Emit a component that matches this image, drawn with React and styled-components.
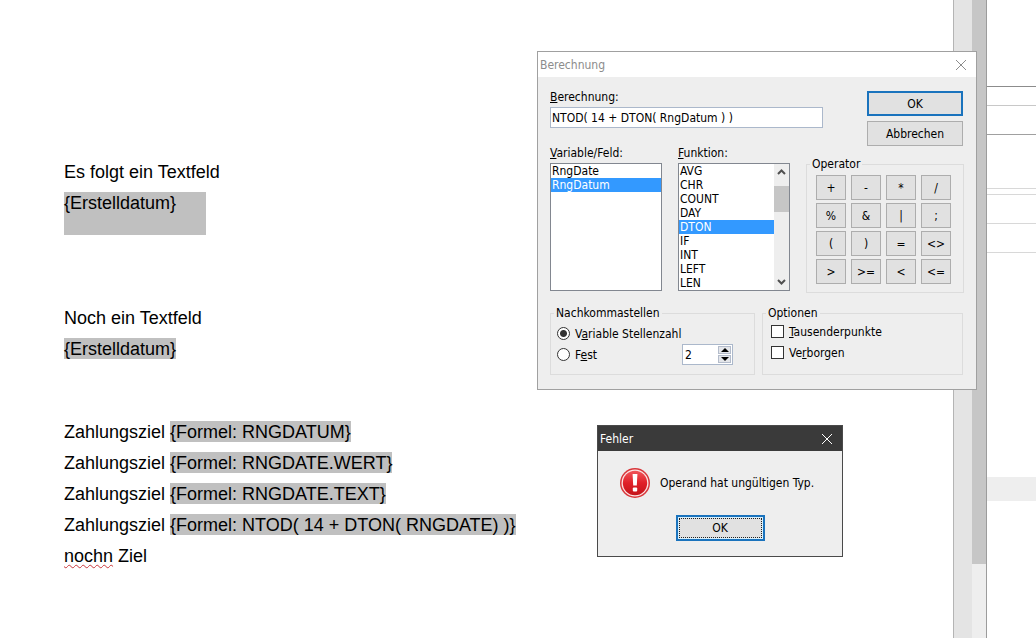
import React, { useState } from 'react';
import styled, { createGlobalStyle } from 'styled-components';

const GlobalStyle = createGlobalStyle`
    * {
        box-sizing: border-box;
    }

    body {
        margin: 0;
        background: #fff;
        color: #000;
        font-family: 'DejaVu Sans Condensed', 'Noto Sans', sans-serif;
        font-size: 12px;
        overflow: hidden;
    }

    button, input, select {
        margin: 0;
        padding: 0;
        font: inherit;
        color: inherit;
    }

    svg {
        flex-shrink: 0;
    }
`;

/* ---------- writer page in the background ---------- */

const Desktop = styled.div`
    position: relative;
    display: flex;
    min-height: 100vh;
`;

const Page = styled.main`
    flex: 1;
    padding: 162px 0 0 64px;
    font-family: 'Liberation Sans', Arial, sans-serif;
    font-size: 18px;
    line-height: 21px;
`;

const Section = styled.section`
    margin-bottom: ${({ $space }) => $space || 0}px;
`;

const Paragraph = styled.p`
    margin: 0 0 10px;
    white-space: nowrap;

    &:last-child {
        margin-bottom: 0;
    }
`;

const Field = styled.span`
    display: inline-block;
    height: 21px;
    margin-top: -1px;
    padding-top: 1px;
    vertical-align: top;
    background: #c0c0c0;
`;

const Frame = styled.div`
    width: 142px;
    height: 43px;
    margin-top: -1px;
    padding-top: 1px;
    background: #c0c0c0;
`;

const Misspelled = styled.span`
    text-decoration: underline wavy #c8383c 1px;
    text-underline-offset: 2px;
    text-decoration-skip-ink: none;
`;

const PageEdge = styled.div`
    width: 19px;
    border-left: 1px solid #b4b4b4;
    background: #e4e4e4;
`;

const PageScroll = styled.div`
    width: 15px;
    border-right: 1px solid #9c9c9c;
    background: #eee;
`;

const PageThumb = styled.div`
    height: 564px;
    background: #c6c6c6;
`;

const Sidebar = styled.aside`
    width: 49px;
`;

const SidebarRow = styled.div`
    height: ${({ $height }) => $height}px;
    border-bottom: 1px solid ${({ $line }) => $line || '#d8d8d8'};
`;

const SidebarBand = styled.div`
    height: 24px;
    margin-top: 224px;
    background: #eee;
`;

/* ---------- windows ---------- */

const Window = styled.section`
    position: absolute;
    left: ${({ $left }) => $left}px;
    top: ${({ $top }) => $top}px;
    width: ${({ $width }) => $width}px;
    border: 1px solid ${({ $dark }) => ($dark ? '#4a4a4a' : '#a0a0a0')};
    background: #eee;
`;

const TitleBar = styled.header`
    display: flex;
    align-items: center;
    justify-content: space-between;
    height: 25px;
    padding: 0 9px 0 2px;
    background: ${({ $dark }) => ($dark ? '#3a3a3a' : '#fff')};
    color: ${({ $dark }) => ($dark ? '#fff' : '#8c8c8c')};
`;

const Title = styled.h1`
    margin: 0;
    font-size: 12px;
    font-weight: 400;
`;

const CloseButton = styled.button`
    display: flex;
    border: 0;
    background: none;
`;

const Body = styled.form`
    padding: 14px 12px 14px;
`;

const Row = styled.div`
    display: flex;
    gap: ${({ $gap }) => $gap}px;
    margin-bottom: ${({ $space }) => $space || 0}px;
`;

const Labelled = styled.div`
    width: ${({ $width }) => $width}px;
`;

const Label = styled.label`
    display: block;
    margin-bottom: 4px;
    line-height: 12px;
`;

const FormulaInput = styled.input`
    display: block;
    width: 100%;
    height: 21px;
    padding: 0 1px;
    border: 1px solid #abb8cb;
    background: #fff;
    outline: 0;
`;

const ButtonStack = styled.div`
    display: flex;
    flex-direction: column;
    gap: 5px;
    width: 96px;
`;

const PushButton = styled.button`
    height: 25px;
    border: ${({ $primary }) => ($primary ? '2px solid #1a73bd' : '1px solid #adadad')};
    background: #e1e1e1;
    text-align: center;
`;

const ListBox = styled.div`
    display: flex;
    height: 128px;
    border: 1px solid #828790;
    background: #fff;
`;

const List = styled.select`
    flex: 1;
    min-width: 0;
    height: 126px;
    border: 0;
    border-radius: 0;
    background: #fff;
    outline: 0;
    overflow: hidden;
    scrollbar-width: none;

    option {
        height: 14px;
        min-height: 0;
        padding: 0 1px;
        line-height: 14px;
    }

    option:checked {
        background: #3399ff linear-gradient(#3399ff, #3399ff);
        color: #fff;
        -webkit-text-fill-color: #fff;
    }
`;

const ListScroll = styled.div`
    display: flex;
    flex-direction: column;
    justify-content: space-between;
    align-items: center;
    width: 15px;
    padding: 4px 0;
    background: #eee;
`;

const ListThumb = styled.div`
    width: 15px;
    height: 26px;
    margin: 0 0 56px;
    background: #c6c6c6;
`;

const Group = styled.fieldset`
    width: ${({ $width }) => $width}px;
    min-width: 0;
    margin: ${({ $drop }) => $drop || 0}px 0 0;
    padding: 0 3px;
    border: 1px solid #dcdcdc;

    legend {
        padding: 0 2px;
        line-height: 15px;
    }
`;

const Keypad = styled.div`
    display: grid;
    grid-template-columns: repeat(4, 30px);
    gap: 3px 5px;
    padding: 3px 6px 8px;
`;

const Choices = styled.div`
    padding: ${({ $top }) => $top || 0}px ${({ $inset }) => $inset}px 9px;
`;

const Choice = styled.div`
    display: flex;
    align-items: center;
    height: 21px;

    label {
        display: flex;
        align-items: center;
        gap: 5px;
    }
`;

const Radio = styled.input`
    appearance: none;
    width: 13px;
    height: 13px;
    border: 1px solid #333;
    border-radius: 50%;
    background: #fff;

    &:checked {
        background: radial-gradient(circle, #333 3px, #fff 4px);
    }
`;

const Check = styled.input`
    appearance: none;
    width: 13px;
    height: 13px;
    border: 1px solid #333;
    background: #fff;

    &:checked {
        background: #333;
        box-shadow: inset 0 0 0 2px #fff;
    }
`;

const Spin = styled.div`
    display: flex;
    width: 51px;
    height: 21px;
    margin: 0 15px 0 auto;
    border: 1px solid #abb8cb;
    background: #fff;

    input {
        flex: 1;
        min-width: 0;
        padding-left: 2px;
        border: 0;
        background: none;
        outline: 0;
    }
`;

const SpinButtons = styled.div`
    display: flex;
    flex-direction: column;
    gap: 1px;
    width: 14px;
    padding: 1px 1px 1px 0;

    button {
        display: flex;
        flex: 1;
        align-items: center;
        justify-content: center;
        border: 1px solid #b4bccb;
        background: #e4e6ea;
    }
`;

const Message = styled.div`
    display: flex;
    align-items: center;
    gap: 9px;
    padding: 16px 21px 0;

    p {
        margin: 0;
        white-space: nowrap;
    }
`;

const Confirm = styled.div`
    display: flex;
    justify-content: center;
    padding: 16px 0 15px;
`;

const FocusedButton = styled.button`
    width: 89px;
    height: 26px;
    padding: 1px;
    border: 2px solid #1a73bd;
    background: #e1e1e1;
    box-shadow: inset 0 0 0 1px #d8f0fc;

    span {
        display: block;
        border: 1px dotted #222;
        line-height: 18px;
    }
`;

const CloseIcon = () => (
    <svg width="12" height="12" viewBox="0 0 12 12" fill="none" stroke="currentColor">
        <path d="M1 1 L11 11 M11 1 L1 11" />
    </svg>
);

const Chevron = ({ down }) => (
    <svg width="9" height="7" viewBox="0 0 9 7" fill="none" stroke="#505050" strokeWidth="2">
        <path d={down ? 'M1 1 L4.5 4.5 L8 1' : 'M1 6 L4.5 2.5 L8 6'} />
    </svg>
);

const Arrow = ({ down }) => (
    <svg width="8" height="4" viewBox="0 0 8 4">
        <path d={down ? 'M0 0 H8 L4 4 Z' : 'M0 4 H8 L4 0 Z'} />
    </svg>
);

const ErrorIcon = () => (
    <svg width="32" height="32" viewBox="0 0 32 32">
        <defs>
            <linearGradient id="errorRed" x1="0" y1="0" x2="0" y2="1">
                <stop offset="0" stopColor="#f0555a" />
                <stop offset="0.5" stopColor="#e02028" />
                <stop offset="1" stopColor="#c4141a" />
            </linearGradient>
        </defs>
        <circle cx="16" cy="16" r="15" fill="#d8363a" />
        <circle cx="16" cy="16" r="13.5" fill="#fbe4e4" />
        <circle cx="16" cy="16" r="12.2" fill="url(#errorRed)" />
        <path d="M13.6 7 H18.4 L17.8 18.5 H14.2 Z" fill="#fff" />
        <rect x="13.8" y="20.4" width="4.4" height="4" rx="1" fill="#fff" />
    </svg>
);

const operators = ['+', '-', '*', '/', '%', '&', '|', ';', '(', ')', '=', '<>', '>', '>=', '<', '<='];
const functions = ['AVG', 'CHR', 'COUNT', 'DAY', 'DTON', 'IF', 'INT', 'LEFT', 'LEN'];
const formulas = ['RNGDATUM', 'RNGDATE.WERT', 'RNGDATE.TEXT', 'NTOD( 14 + DTON( RNGDATE) )'];

const Document = () => (
    <Page>
        <Section $space={73}>
            <Paragraph>Es folgt ein Textfeld</Paragraph>
            <Frame>{'{Erstelldatum}'}</Frame>
        </Section>
        <Section $space={62}>
            <Paragraph>Noch ein Textfeld</Paragraph>
            <Paragraph><Field>{'{Erstelldatum}'}</Field></Paragraph>
        </Section>
        <Section>
            {formulas.map(formula => (
                <Paragraph key={formula}>
                    Zahlungsziel <Field>{`{Formel: ${formula}}`}</Field>
                </Paragraph>
            ))}
            <Paragraph><Misspelled>nochn</Misspelled> Ziel</Paragraph>
        </Section>
    </Page>
);

const CalculationDialog = () => {
    const [formula, setFormula] = useState('NTOD( 14 + DTON( RngDatum ) )');
    const [places, setPlaces] = useState(2);

    const append = operator => () => setFormula(`${formula} ${operator}`);

    return (
        <Window $left={537} $top={51} $width={440}>
            <TitleBar>
                <Title>Berechnung</Title>
                <CloseButton type="button" aria-label="Schließen"><CloseIcon /></CloseButton>
            </TitleBar>
            <Body onSubmit={e => e.preventDefault()}>
                <Row $gap={44} $space={1}>
                    <Labelled $width={273}>
                        <Label htmlFor="formula"><u>B</u>erechnung:</Label>
                        <FormulaInput
                            id="formula"
                            value={formula}
                            onChange={e => setFormula(e.target.value)}
                        />
                    </Labelled>
                    <ButtonStack>
                        <PushButton $primary>OK</PushButton>
                        <PushButton type="button">Abbrechen</PushButton>
                    </ButtonStack>
                </Row>

                <Row $gap={16} $space={13}>
                    <Labelled $width={112}>
                        <Label htmlFor="variable"><u>V</u>ariable/Feld:</Label>
                        <ListBox>
                            <List id="variable" size={9} defaultValue="RngDatum">
                                <option>RngDate</option>
                                <option>RngDatum</option>
                            </List>
                        </ListBox>
                    </Labelled>
                    <Labelled $width={112}>
                        <Label htmlFor="function"><u>F</u>unktion:</Label>
                        <ListBox>
                            <List id="function" size={9} defaultValue="DTON">
                                {functions.map(name => <option key={name}>{name}</option>)}
                            </List>
                            <ListScroll>
                                <Chevron />
                                <ListThumb />
                                <Chevron down />
                            </ListScroll>
                        </ListBox>
                    </Labelled>
                    <Group $width={158} $drop={10}>
                        <legend>Operator</legend>
                        <Keypad>
                            {operators.map(operator => (
                                <PushButton key={operator} type="button" onClick={append(operator)}>
                                    {operator}
                                </PushButton>
                            ))}
                        </Keypad>
                    </Group>
                </Row>

                <Row $gap={7}>
                    <Group $width={205}>
                        <legend>Nachkommastellen</legend>
                        <Choices $top={2} $inset={3}>
                            <Choice>
                                <label>
                                    <Radio type="radio" name="places" defaultChecked />
                                    <span>V<u>a</u>riable Stellenzahl</span>
                                </label>
                            </Choice>
                            <Choice>
                                <label>
                                    <Radio type="radio" name="places" />
                                    <span>F<u>e</u>st</span>
                                </label>
                                <Spin>
                                    <input
                                        aria-label="Anzahl Nachkommastellen"
                                        value={places}
                                        onChange={e => setPlaces(Number(e.target.value) || 0)}
                                    />
                                    <SpinButtons>
                                        <button type="button" aria-label="Mehr" onClick={() => setPlaces(places + 1)}>
                                            <Arrow />
                                        </button>
                                        <button type="button" aria-label="Weniger" onClick={() => setPlaces(Math.max(0, places - 1))}>
                                            <Arrow down />
                                        </button>
                                    </SpinButtons>
                                </Spin>
                            </Choice>
                        </Choices>
                    </Group>
                    <Group $width={201}>
                        <legend>Optionen</legend>
                        <Choices $inset={5}>
                            <Choice>
                                <label>
                                    <Check type="checkbox" />
                                    <span><u>T</u>ausenderpunkte</span>
                                </label>
                            </Choice>
                            <Choice>
                                <label>
                                    <Check type="checkbox" />
                                    <span>Ve<u>r</u>borgen</span>
                                </label>
                            </Choice>
                        </Choices>
                    </Group>
                </Row>
            </Body>
        </Window>
    );
};

const ErrorDialog = () => (
    <Window $left={597} $top={425} $width={246} $dark role="alertdialog">
        <TitleBar $dark>
            <Title>Fehler</Title>
            <CloseButton type="button" aria-label="Schließen"><CloseIcon /></CloseButton>
        </TitleBar>
        <Message>
            <ErrorIcon />
            <p>Operand hat ungültigen Typ.</p>
        </Message>
        <Confirm>
            <FocusedButton type="button"><span>OK</span></FocusedButton>
        </Confirm>
    </Window>
);

const App = () => (
    <>
        <GlobalStyle />
        <Desktop>
            <Document />
            <PageEdge />
            <PageScroll>
                <PageThumb />
            </PageScroll>
            <Sidebar>
                <SidebarRow $height={87} $line="#8c8c8c" />
                <SidebarRow $height={19} $line="#c8c8c8" />
                <SidebarRow $height={29} $line="#a0a0a0" />
                <SidebarRow $height={54} />
                <SidebarRow $height={6} />
                <SidebarRow $height={29} />
                <SidebarRow $height={29} />
                <SidebarBand />
            </Sidebar>
            <CalculationDialog />
            <ErrorDialog />
        </Desktop>
    </>
);

export default App;
